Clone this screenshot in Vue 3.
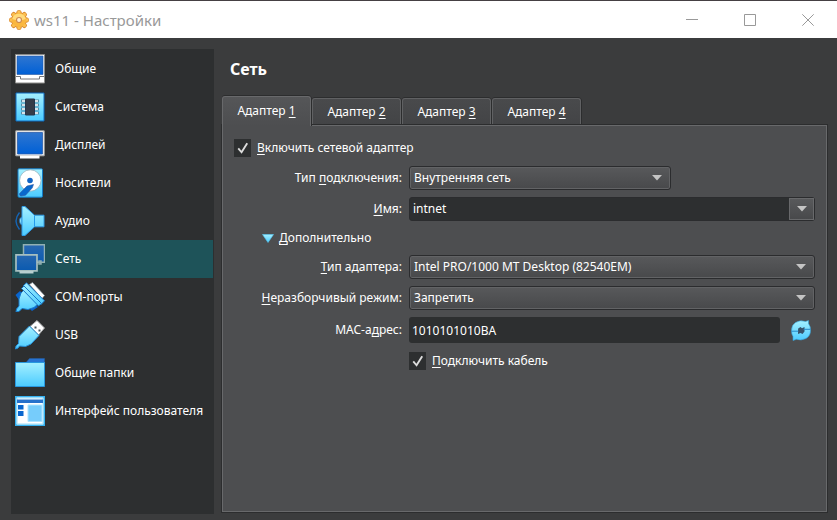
<script setup>
import { ref } from 'vue'

const categories = [
  { id: 'general', name: 'Общие' },
  { id: 'system', name: 'Система' },
  { id: 'display', name: 'Дисплей' },
  { id: 'storage', name: 'Носители' },
  { id: 'audio', name: 'Аудио' },
  { id: 'network', name: 'Сеть' },
  { id: 'serial', name: 'COM-порты' },
  { id: 'usb', name: 'USB' },
  { id: 'folders', name: 'Общие папки' },
  { id: 'interface', name: 'Интерфейс пользователя' },
]
const category = ref('network')
const adapter = ref(1)
const enabled = ref(true)
const cable = ref(true)
const attachment = ref('Внутренняя сеть')
const network = ref('intnet')
const adapterType = ref('Intel PRO/1000 MT Desktop (82540EM)')
const promiscuous = ref('Запретить')
const mac = ref('1010101010BA')
</script>

<template>
  <div class="window">
    <header class="titlebar">
      <svg class="gear" viewBox="0 0 20 20" aria-hidden="true">
        <g stroke="#dd8f35" stroke-width="1">
          <g fill="#fcc050">
            <rect v-for="a in [0, 45, 90, 135]" :key="a" x="8" y=".5" width="4" height="19" rx="1.500" :transform="`rotate(${a} 10 10)`" />
          </g>
          <circle cx="10" cy="10" r="7.500" fill="#f9b23a" />
        </g>
        <g fill="#fcc050">
          <rect v-for="a in [0, 45, 90, 135]" :key="a" x="8.500" y="1" width="3" height="18" rx="1" :transform="`rotate(${a} 10 10)`" />
        </g>
        <circle cx="10" cy="10" r="7" fill="#fab73f" />
        <path d="M3.200 9a7 7 0 0 1 13.600 0q-6.800 2.500-13.600 0z" fill="#ffda7a" />
        <circle cx="10" cy="10" r="2.500" fill="#fff3d8" stroke="#cf8a50" stroke-width="1.200" />
      </svg>
      <h1>ws11 - Настройки</h1>
      <div class="controls">
        <button type="button" aria-label="Свернуть">
          <svg viewBox="0 0 12 12"><path d="M0 5.500h12" /></svg>
        </button>
        <button type="button" aria-label="Развернуть">
          <svg viewBox="0 0 12 12"><path d="M.5.5h11v11H.5z" /></svg>
        </button>
        <button type="button" aria-label="Закрыть">
          <svg viewBox="0 0 12 12"><path d="M.3.3l11.400 11.400M11.700.3L.3 11.700" /></svg>
        </button>
      </div>
    </header>

    <svg class="defs" aria-hidden="true">
      <defs>
        <linearGradient id="sky" x1="0" y1="0" x2="0" y2="1">
          <stop offset="0" stop-color="#a5f0ff" />
          <stop offset="1" stop-color="#4bcbff" />
        </linearGradient>
        <linearGradient id="screen" x1="0" y1="0" x2="0" y2="1">
          <stop offset="0" stop-color="#2f76d0" />
          <stop offset="1" stop-color="#0060d6" />
        </linearGradient>
        <linearGradient id="dimScreen" x1="0" y1="0" x2="0" y2="1">
          <stop offset="0" stop-color="#2868b0" />
          <stop offset="1" stop-color="#0a5ab0" />
        </linearGradient>
      </defs>
    </svg>

    <div class="body">
      <nav class="sidebar" aria-label="Разделы">
        <button
          v-for="c in categories"
          :key="c.id"
          type="button"
          class="category"
          :class="{ active: category === c.id }"
          @click="category = c.id"
        >
          <svg class="icon" viewBox="0 0 30 30" aria-hidden="true">
            <g v-if="c.id === 'general'">
              <path d="M.5.500h29v28.500H.5z" fill="#fff" stroke="#8b8b88" />
              <path d="M2 2h26v18.500H2z" fill="url(#screen)" stroke="#2456a0" stroke-width=".6" />
              <path d="M1 22.500h4.500v2.500h19v-2.500H29" fill="none" stroke="#77777a" />
            </g>
            <g v-else-if="c.id === 'system'">
              <path d="M1 1h28v28H1z" fill="url(#sky)" stroke="#0d6bc0" />
              <path d="M6 9h18M6 13h18M6 17h18M6 21h18" stroke="#5889a4" stroke-width="3" />
              <path d="M7 9h16M7 13h16M7 17h16M7 21h16" stroke="#fff" stroke-width="1.500" />
              <path d="M10.500 7h9v16h-9z" fill="#353c48" stroke="#25364c" />
            </g>
            <g v-else-if="c.id === 'display'">
              <path d="M.8.800h28.400v25H.8z" fill="#fff" stroke="#a4a5a5" />
              <path d="M2.500 2.500h25v21.500h-25z" fill="url(#screen)" stroke="#285ca8" stroke-width=".8" />
              <path d="M5 25.500h19.500v3H5z" fill="#fff" />
            </g>
            <g v-else-if="c.id === 'storage'">
              <rect x="3" y=".8" width="24.500" height="28.400" rx="1" fill="url(#sky)" stroke="#137bc4" />
              <circle cx="15.300" cy="12.500" r="10.700" fill="#fff" stroke="#8ba9b6" stroke-width=".7" />
              <circle cx="15" cy="12.500" r="2.800" fill="#1264c5" />
              <path d="M18.500 16.500 12 18 4.700 25.400Q4 27.800 6 28l4.500-.8 6.700-7.200z" fill="#0868cc" stroke="#3054a0" stroke-width=".6" />
            </g>
            <g v-else-if="c.id === 'audio'">
              <path d="M4.500 6.500Q-2.500 15 4.500 23.500" fill="none" stroke="#1565b4" stroke-width="1.400" />
              <path d="M7 11q-3 1-2.500 4 .2 3.500 2.500 4z" fill="#8ee5ff" stroke="#1a6cb8" stroke-width=".8" />
              <path d="M7 .5h3l9.500 8.700h9.500v11.600h-9.500L10 29.500H7z" fill="url(#sky)" stroke="#2e9ae5" />
              <path d="M19.500 9.500v11" stroke="#239bed" />
            </g>
            <g v-else-if="c.id === 'network'">
              <path d="M8.500.8h21v17.500h-21zM24 17h2v3h-2z" fill="url(#dimScreen)" stroke="#91b0b2" stroke-width="1.500" />
              <path d="M1 10.800h21v16H1z" fill="url(#dimScreen)" stroke="#a6bfc0" stroke-width="1.700" />
              <path d="M4.500 27h14v2.500h-14z" fill="#b7cfd0" />
            </g>
            <g v-else-if="c.id === 'serial'">
              <path d="M14.500 2.500 17.500.5l12 13-2.500 3z" fill="#fff" stroke="#8f9da4" stroke-width=".7" />
              <path d="M.5 13 5 9l5 5-6 4zM14 26l5-5 4 4-6 4z" fill="#0965ce" />
              <path d="M4 24 4 17 6 11l3-3 14 14-4 3.500-6 2-6-1-3 3-3 .5.500-3z" fill="url(#sky)" stroke="#1878c9" />
              <path d="M8.500 3.500 11.500.8l18 18-3.500 3.700z" fill="url(#sky)" stroke="#1878c9" />
              <path d="M6.500 6.500 9 4l17.500 17.500-3 2.500z" fill="url(#sky)" stroke="#1878c9" />
            </g>
            <g v-else-if="c.id === 'usb'">
              <path d="M15 6.500 22 .5l7.500 7.500-6 7z" fill="#fff" stroke="#a2a4a5" />
              <path d="M19.500 6.500h2v2h-2zm4 3h2v2h-2z" fill="#4a5559" />
              <path d="M14.500 6 24 15.500l-8 8.500-5.500 2.500-6-.5-1.500 2-2.500 1 .5-3 2.500-2.500.5-7z" fill="url(#sky)" stroke="#258dd5" />
            </g>
            <g v-else-if="c.id === 'folders'">
              <path d="M11 4.500 14.500.5h15V5z" fill="#2773d1" stroke="#2260a7" stroke-width=".5" />
              <path d="M.5 4.500h29v24H.5z" fill="url(#sky)" stroke="#2898df" />
            </g>
            <g v-else>
              <path d="M.8.800h28.400v28.400H.8z" fill="#fff" stroke="#35b1f0" stroke-width="1.600" />
              <path d="M2 2h26v26H2z" fill="none" stroke="#9cdffa" />
              <path d="M2 3.500h26v3.500H2z" fill="#2671cb" />
              <path d="M3 9h5.500v4.500H3zm0 6h5.500v5H3z" fill="#0966ce" />
              <path d="M13 9h14v16.500H13z" fill="#76ccfb" stroke="#aee3ff" />
            </g>
          </svg>
          <span>{{ c.name }}</span>
        </button>
      </nav>

      <main>
        <h2>Сеть</h2>
        <div class="tabs" role="tablist">
          <button
            v-for="n in 4"
            :key="n"
            type="button"
            role="tab"
            class="tab"
            :class="{ current: adapter === n }"
            :aria-selected="adapter === n"
            @click="adapter = n"
          >Адаптер <u>{{ n }}</u></button>
        </div>
        <form class="panel" @submit.prevent>
          <label class="check"><input v-model="enabled" type="checkbox"><svg viewBox="0 0 18 18" aria-hidden="true"><path d="M4.500 9.500 8 13.500 14 4" /></svg><span><u>В</u>ключить сетевой адаптер</span></label>

          <div class="fields">
            <div class="row">
              <label for="attachment">Тип <u>п</u>одключения:</label>
              <div class="select short">
                <select id="attachment" v-model="attachment"><option>Внутренняя сеть</option></select>
                <svg class="arrow" viewBox="0 0 10 6" aria-hidden="true"><path d="M0 0h10L5 5.500z" /></svg>
              </div>
            </div>
            <div class="row">
              <label for="network"><u>И</u>мя:</label>
              <div class="combo">
                <input id="network" v-model="network" type="text">
                <button type="button" aria-label="Показать список">
                  <svg class="arrow" viewBox="0 0 10 6" aria-hidden="true"><path d="M0 0h10L5 5.500z" /></svg>
                </button>
              </div>
            </div>
            <button class="advanced" type="button" aria-expanded="true">
              <svg viewBox="0 0 12 9" aria-hidden="true"><path d="M.5.500h11L6 8.500z" fill="url(#sky)" stroke="#58c9f5" stroke-width=".6" /></svg>
              <span><u>Д</u>ополнительно</span>
            </button>
            <div class="row">
              <label for="type"><u>Т</u>ип адаптера:</label>
              <div class="select">
                <select id="type" v-model="adapterType"><option>Intel PRO/1000 MT Desktop (82540EM)</option></select>
                <svg class="arrow" viewBox="0 0 10 6" aria-hidden="true"><path d="M0 0h10L5 5.500z" /></svg>
              </div>
            </div>
            <div class="row">
              <label for="promiscuous"><u>Н</u>еразборчивый режим:</label>
              <div class="select">
                <select id="promiscuous" v-model="promiscuous"><option>Запретить</option></select>
                <svg class="arrow" viewBox="0 0 10 6" aria-hidden="true"><path d="M0 0h10L5 5.500z" /></svg>
              </div>
            </div>
            <div class="row">
              <label for="mac">MAC-а<u>д</u>рес:</label>
              <div class="mac">
                <input id="mac" v-model="mac" type="text">
                <button type="button" aria-label="Создать новый MAC-адрес">
                  <svg viewBox="0 0 20 21" aria-hidden="true">
                    <path d="M.5 10.500Q.5 5 4.500 2.500 9-.5 14.500 1.500L17.500.5V3.500Q19.500 6 19.500 10.500 19.500 16 15 18.500 10 21 5.500 19.300L2 20.500V16.500Q.5 14.500.5 10.500z" fill="url(#sky)" stroke="#36a3dc" stroke-width=".6" />
                    <path d="M7 10.500 7.200 8.500 9.500 7l1.500 1.200L13.500 7v4.500L11.500 14l-2-1L7 14z" fill="#37536a" />
                    <path d="M.5 11.200h7M19.500 9.300h-7" fill="none" stroke="#2787c7" />
                  </svg>
                </button>
              </div>
            </div>
          </div>
          <div class="row">
            <label class="check"><input v-model="cable" type="checkbox"><svg viewBox="0 0 18 18" aria-hidden="true"><path d="M4.500 9.500 8 13.500 14 4" /></svg><span><u>П</u>одключить кабель</span></label>
          </div>
        </form>
      </main>
    </div>
  </div>
</template>

<style>
body {
  margin: 0;
  background: #3b3c3d;
}
</style>

<style scoped>
* {
  box-sizing: border-box;
}

.window {
  display: flex;
  flex-direction: column;
  min-height: 100vh;
  color: #fff;
  background: #3b3c3d;
  font: 12px/16px "Noto Sans", sans-serif;
}

button,
input,
select {
  margin: 0;
  padding: 0;
  border: 0;
  color: inherit;
  background: none;
  font: inherit;
}

svg {
  display: block;
  flex: none;
}

u {
  text-underline-offset: 2px;
  text-decoration-thickness: 1px;
}

.defs {
  position: absolute;
  width: 0;
  height: 0;
}

.titlebar {
  display: flex;
  align-items: center;
  height: 38px;
  padding-left: 9px;
  border-top: 1px solid #454043;
  color: #999;
  background: #fff;
}

.gear {
  width: 20px;
  height: 20px;
}

h1 {
  margin: 0 auto 0 5px;
  font: 15px/20px "Noto Sans", sans-serif;
}

.controls {
  display: flex;
  align-self: stretch;
}

.controls button {
  display: grid;
  place-items: center;
  width: 58px;
}

.controls svg {
  width: 12px;
  height: 12px;
  fill: none;
  stroke: #999;
}

.body {
  display: flex;
  flex: 1;
  gap: 8px;
  padding: 11px 9px 6px 11px;
}

.sidebar {
  flex: none;
  width: 203px;
  padding: 1px;
  background: #2d2f30;
}

.category {
  display: flex;
  align-items: center;
  gap: 10px;
  width: 100%;
  height: 38px;
  padding: 0 3px;
  text-align: left;
  white-space: nowrap;
}

.category.active {
  background: #1e5359;
}

.icon {
  width: 30px;
  height: 30px;
}

main {
  display: flex;
  flex: 1;
  flex-direction: column;
  min-width: 0;
  padding: 0 1px 2px 0;
}

h2 {
  margin: 10px 8px 17px;
  font: bold 16px/20px "Noto Sans", sans-serif;
}

.tabs {
  display: flex;
  align-items: flex-end;
  gap: 1px;
  height: 29px;
}

.tab {
  width: 89px;
  height: 27px;
  border: 1px solid #606163;
  border-bottom: 0;
  border-radius: 3px 3px 0 0;
  background: linear-gradient(#494a4c, #434446);
  box-shadow: 0 -1px #2c2d2e, 1px 0 #2c2d2e;
}

.tab.current {
  z-index: 1;
  height: 30px;
  margin-bottom: -1px;
  padding-bottom: 2px;
  border-color: #68696b;
  background: linear-gradient(#555658, #4d4e50);
}

.panel {
  display: flex;
  flex: 1;
  flex-direction: column;
  gap: 9px;
  padding: 13px 11px;
  border: 1px solid #68696b;
  background: #4d4e50;
  box-shadow: 0 0 0 1px #2c2d2e;
}

.fields {
  display: flex;
  flex-direction: column;
  gap: 7px;
}

.check {
  display: flex;
  align-items: center;
  align-self: flex-start;
  gap: 6px;
}

.check input {
  width: 17px;
  height: 18px;
  appearance: none;
  background: #2d2f30;
}

.check svg {
  width: 17px;
  height: 18px;
  margin-left: -23px;
  fill: none;
  stroke: #ddd;
  stroke-width: 2;
  pointer-events: none;
}

.check input:not(:checked) + svg {
  visibility: hidden;
}

.row {
  display: grid;
  grid-template-columns: 168px 1fr;
  gap: 7px;
  align-items: center;
}

.row > label:first-child {
  text-align: right;
}

.row > .check:first-child {
  grid-column: 2;
}

.select {
  display: grid;
  align-items: center;
}

.short {
  width: 262px;
}

.select select {
  grid-area: 1 / 1;
  width: 100%;
  height: 24px;
  padding: 0 24px 0 4px;
  appearance: none;
  border: 1px solid #2b2c2e;
  border-radius: 3px;
  background: linear-gradient(#58595b, #48494b);
  box-shadow: inset 0 0 0 1px #626365;
}

.arrow {
  width: 10px;
  height: 6px;
  fill: #c4c4c4;
}

.select .arrow {
  grid-area: 1 / 1;
  justify-self: end;
  margin-right: 9px;
  pointer-events: none;
}

.combo {
  display: flex;
  height: 24px;
  border: 1px solid #2b2c2e;
  border-radius: 3px;
  background: #2d2f30;
}

.combo input {
  flex: 1;
  min-width: 0;
  padding: 0 3px;
}

.combo button {
  display: grid;
  place-items: center;
  width: 25px;
  border: 1px solid #68696b;
  background: linear-gradient(#58595b, #48494b);
}

.advanced {
  display: flex;
  align-items: center;
  align-self: flex-start;
  gap: 5px;
  height: 20px;
  margin-left: 28px;
}

.advanced svg {
  width: 12px;
  height: 9px;
}

.mac {
  display: flex;
  align-items: center;
  gap: 11px;
  padding-right: 4px;
}

.mac input {
  flex: 1;
  min-width: 0;
  height: 26px;
  padding: 0 3px;
  border-radius: 3px;
  background: #2d2f30;
}

.mac button svg {
  width: 20px;
  height: 21px;
}
</style>
